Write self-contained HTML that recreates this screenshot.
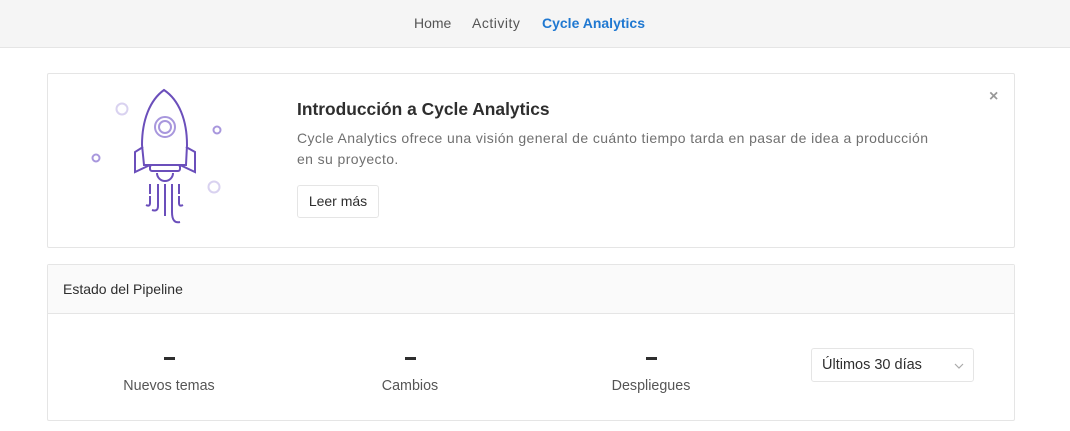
<!DOCTYPE html>
<html><head><meta charset="utf-8"><style>
*{box-sizing:border-box;margin:0;padding:0}
body{width:1070px;height:431px;background:#fff;font-family:"Liberation Sans",sans-serif;position:relative;overflow:hidden;color:#2e2e2e}
.nav{position:absolute;left:0;top:0;width:1070px;height:48px;background:#f5f5f5;border-bottom:1px solid #e5e5e5}
.nav span{position:absolute;top:15px;font-size:14px;color:#555}
.box{position:absolute;border:1px solid #e5e5e5;border-radius:2px}
.t{position:absolute}
.dash{position:absolute;width:11px;height:3px;background:#2e2e2e;top:357px}
.lbl{position:absolute;top:378px;font-size:14.3px;color:#555;width:200px;text-align:center}
</style></head><body>
<div class="nav">
<span style="left:414px">Home</span>
<span style="left:472px;letter-spacing:0.5px">Activity</span>
<span style="left:542px;color:#1f78d1;font-weight:bold">Cycle Analytics</span>
</div>
<div class="box" style="left:47px;top:73px;width:968px;height:175px"></div>
<svg class="t" style="left:0;top:0" width="300" height="240" fill="none" stroke="#6b4fbb" stroke-width="2">
<path d="M164 90 C150 100 142 120 142 145 L144 165 L186 165 L187 145 C187 120 179 100 164 90 Z"/>
<path d="M143 147 L135 152 L135 172 L150 165"/>
<path d="M186 147 L195 152 L195 172 L180 165"/>
<rect x="150" y="165" width="30" height="6" rx="2"/>
<path d="M157 173 A8 8 0 0 0 173 173"/>
<circle cx="165" cy="127" r="10" stroke="#a897dd"/>
<circle cx="165" cy="127" r="6" stroke="#a897dd"/>
<path d="M150 184 V194 M158 184 V206 Q158 212 152 210 M165 184 V216 M172 184 V212 Q172 224 180 222 M179 184 V194"/>
<path d="M150 196 V203 Q150 207 146 205 M165 184 v4 M179 196 V203 Q179 207 183 205"/>
<circle cx="122" cy="109" r="5.5" stroke="#d9d2f0"/>
<circle cx="217" cy="130" r="3.5" stroke="#a897dd"/>
<circle cx="96" cy="158" r="3.5" stroke="#a897dd"/>
<circle cx="214" cy="187" r="5.5" stroke="#d9d2f0"/>
</svg>
<div class="t" style="left:297px;top:99px;font-size:17.4px;font-weight:bold;color:#2e2e2e">Introducción a Cycle Analytics</div>
<div class="t" style="left:297px;top:128px;font-size:14px;line-height:21px;color:#707070;width:700px;letter-spacing:0.4px;white-space:nowrap">Cycle Analytics ofrece una visión general de cuánto tiempo tarda en pasar de idea a producción<br>en su proyecto.</div>
<div class="t" style="left:297px;top:185px;width:82px;height:33px;border:1px solid #e5e5e5;border-radius:3px;font-size:14px;line-height:31px;text-align:center">Leer más</div>
<div class="t" style="left:989px;top:88px;font-size:16px;color:#999;font-weight:bold">×</div>
<div class="box" style="left:47px;top:264px;width:968px;height:157px"></div>
<div class="t" style="left:48px;top:265px;width:966px;height:49px;background:#fafafa;border-bottom:1px solid #e5e5e5"></div>
<div class="t" style="left:63px;top:281px;font-size:14px">Estado del Pipeline</div>
<div class="dash" style="left:164px"></div>
<div class="dash" style="left:405px"></div>
<div class="dash" style="left:646px"></div>
<div class="lbl" style="left:69px">Nuevos temas</div>
<div class="lbl" style="left:310px">Cambios</div>
<div class="lbl" style="left:551px">Despliegues</div>
<div class="t" style="left:811px;top:348px;width:163px;height:34px;border:1px solid #e5e5e5;border-radius:3px;font-size:14.5px;line-height:33px;padding-left:10px">Últimos 30 días</div>
<svg class="t" style="left:954px;top:362px" width="10" height="8" fill="none" stroke="#aaa" stroke-width="1.2"><path d="M1 2 L5 6 L9 2"/></svg>
</body></html>
